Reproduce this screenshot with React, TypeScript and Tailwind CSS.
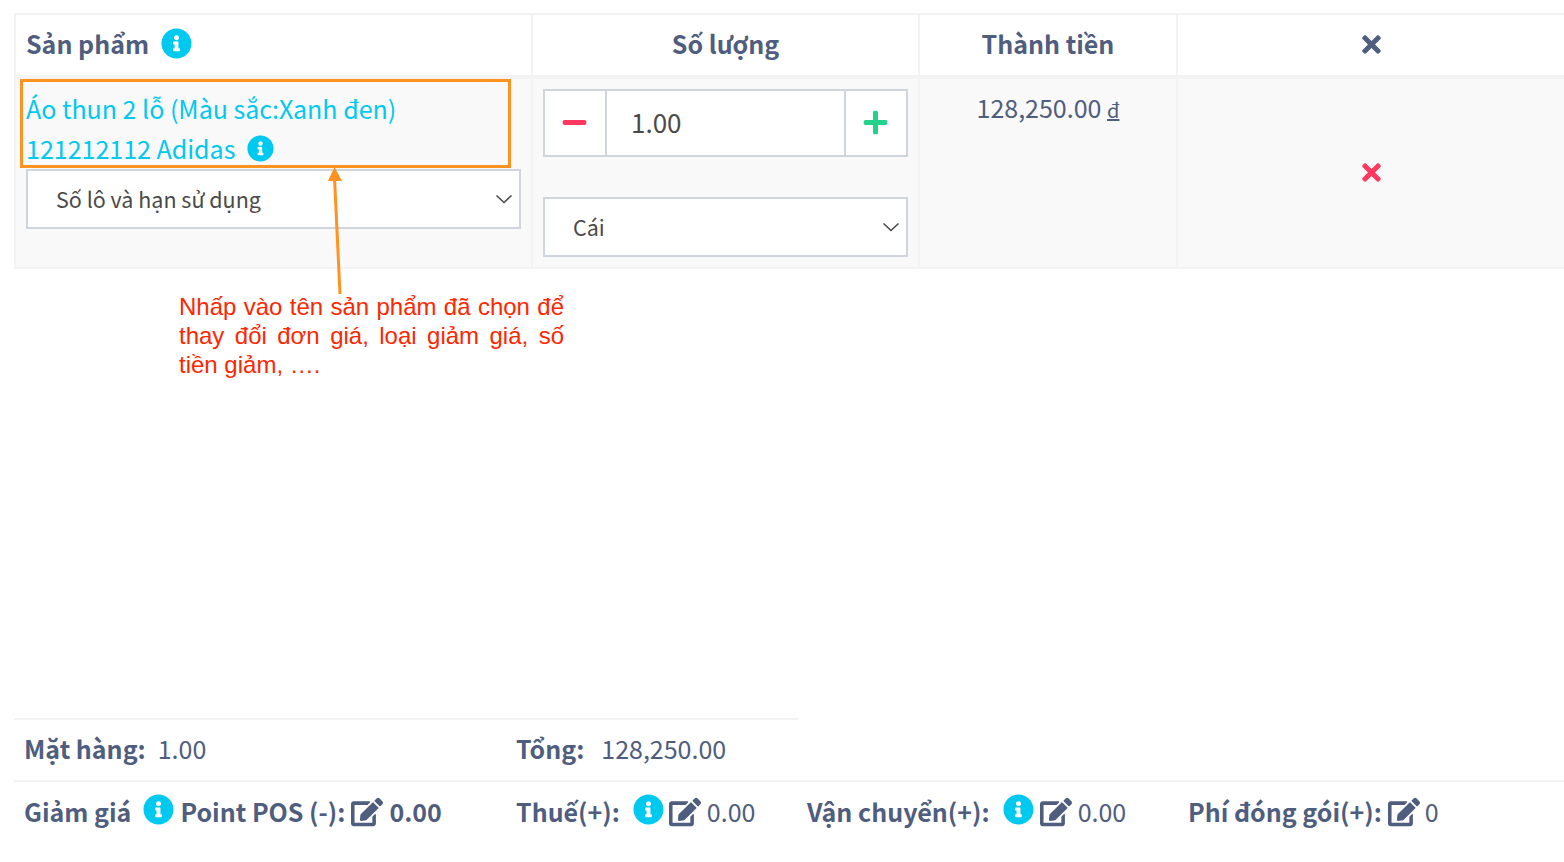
import React from 'react';
import { FaEdit, FaInfoCircle, FaMinus, FaPlus, FaTimes } from 'react-icons/fa';

const font = { fontFamily: '"Noto Sans CJK SC", "Noto Sans", sans-serif' };

function Chevron() {
  return (
    <svg width="18" height="10" viewBox="0 0 18 10" className="absolute right-[6px] top-1/2 -translate-y-1/2" fill="none">
      <path d="M1.5 1.5 L9 8.5 L16.5 1.5" stroke="#4a4a4a" strokeWidth="1.6" />
    </svg>
  );
}

function Select({ label, className }: { label: string; className: string }) {
  return (
    <div className={`relative flex h-[60px] items-center border-2 border-[#d0d5dd] bg-white text-[21.5px] text-[#4a4a4a] ${className}`}>
      <span>{label}</span>
      <Chevron />
    </div>
  );
}

function Info({ size = 31 }: { size?: number }) {
  return <FaInfoCircle size={size} className="shrink-0 text-[#00c9f0]" />;
}

function Edit() {
  return <FaEdit size={32} className="shrink-0 text-[#4f5d7e]" />;
}

export default function App() {
  return (
    <div className="relative h-[862px] w-[1564px] overflow-hidden bg-white pl-[14px] pt-[13px] text-[#4f5d7e]" style={font}>
      <div className="border-t-2 border-[#f3f3f3]">
        {/* header row */}
        <div className="grid h-[60px] grid-cols-[517px_387px_258px_1fr] items-center text-[25px] font-bold">
          <div className="flex h-full items-center gap-[12px] border-l-2 border-[#f3f3f3] pb-[3px] pl-[10px]">
            <span>Sản phẩm</span>
            <Info />
          </div>
          <div className="flex h-full items-center justify-center border-l-2 border-[#f3f3f3] pb-[2px]">Số lượng</div>
          <div className="flex h-full items-center justify-center border-l-2 border-[#f3f3f3] pb-[2px]">Thành tiền</div>
          <div className="flex h-full items-center justify-center border-l-2 border-[#f3f3f3] pb-[2px]">
            <FaTimes size={27} />
          </div>
        </div>

        {/* product row */}
        <div className="grid h-[194px] grid-cols-[517px_387px_258px_1fr] border-t-4 border-b-2 border-[#f3f3f3] bg-[#f9f9f9]">
          <div className="border-l-2 border-[#f3f3f3] pl-[10px] pt-[9px]">
            <div className="text-[25px] leading-[40px] text-[#00c9f0]">Áo thun 2 lỗ (Màu sắc:Xanh đen)</div>
            <div className="flex h-[41px] items-center gap-[12px] text-[25px] leading-[41px] text-[#00c9f0]">
              <span>121212112 Adidas</span>
              <Info size={27} />
            </div>
            <div className="w-[495px]">
              <Select label="Số lô và hạn sử dụng" className="pl-[28px]" />
            </div>
          </div>
          <div className="border-l-2 border-[#f3f3f3] pl-[10px] pt-[10px]">
            <div className="flex h-[68px] w-[365px] border-2 border-[#d0d5dd] bg-white">
              <div className="flex w-[62px] items-center justify-center border-r-2 border-[#d0d5dd] pb-[2px] pr-[2px]">
                <FaMinus size={27} className="text-[#ff3860]" />
              </div>
              <div className="flex flex-1 items-center pb-[4px] pl-[24px] text-[26px] text-[#4a4a4a]">1.00</div>
              <div className="flex w-[62px] items-center justify-center border-l-2 border-[#d0d5dd] pb-[2px] pr-[2px]">
                <FaPlus size={27} className="text-[#23d18b]" />
              </div>
            </div>
            <div className="mt-[40px] w-[365px]">
              <Select label="Cái" className="pl-[28px]" />
            </div>
          </div>
          <div className="border-l-2 border-[#f3f3f3] pt-[10px] text-center text-[25px]">
            128,250.00 <span className="text-[20px] underline">đ</span>
          </div>
          <div className="flex items-center justify-center border-l-2 border-[#f3f3f3] pb-[2px]">
            <FaTimes size={27} className="text-[#ff3860]" />
          </div>
        </div>
      </div>

      {/* totals */}
      <div className="mt-[449px] flex h-[62px] w-[784px] items-center border-t-2 border-[#f3f3f3] pb-[3px] pl-[10px] text-[25px]">
        <div className="flex w-[492px] items-center gap-[12px]">
          <b>Mặt hàng:</b>
          <span>1.00</span>
        </div>
        <div className="flex items-center gap-[17px]">
          <b>Tổng:</b>
          <span>128,250.00</span>
        </div>
      </div>
      <div className="flex h-[63px] items-center border-t-2 border-[#f3f3f3] pb-[2px] pl-[10px] text-[25px]">
        <div className="flex w-[492px] items-center">
          <b>Giảm giá</b>
          <span className="mb-[5px] ml-[12px] mr-[6px]"><Info /></span>
          <b>Point POS (-):</b>
          <span className="mx-[6px]"><Edit /></span>
          <b>0.00</b>
        </div>
        <div className="flex w-[291px] items-center">
          <b>Thuế(+):</b>
          <span className="mb-[5px] ml-[13px] mr-[5px]"><Info /></span>
          <Edit />
          <span className="ml-[6px]">0.00</span>
        </div>
        <div className="flex w-[381px] items-center">
          <b>Vận chuyển(+):</b>
          <span className="mb-[5px] ml-[13px] mr-[6px]"><Info /></span>
          <Edit />
          <span className="ml-[6px]">0.00</span>
        </div>
        <div className="flex items-center">
          <b>Phí đóng gói(+):</b>
          <span className="ml-[6px] mr-[5px]"><Edit /></span>
          <span>0</span>
        </div>
      </div>

      {/* annotation overlay */}
      <div className="absolute left-[20px] top-[79px] h-[89px] w-[491px] border-[3px] border-[#ff9320]" />
      <svg className="absolute left-[320px] top-[160px]" width="30" height="140" viewBox="0 0 30 140" fill="none">
        <path d="M14.5 18 L20 134" stroke="#ff9320" strokeWidth="3" />
        <path d="M14.5 7 L22 21 L8 21 Z" fill="#ff9320" />
      </svg>
      <div
        className="absolute left-[179px] top-[292px] w-[385px] text-justify text-[24px] leading-[29px] text-[#ff2600]"
        style={{ fontFamily: '"Liberation Sans", Arial, sans-serif' }}
      >
        Nhấp vào tên sản phẩm đã chọn để thay đổi đơn giá, loại giảm giá, số tiền giảm, ….
      </div>
    </div>
  );
}
